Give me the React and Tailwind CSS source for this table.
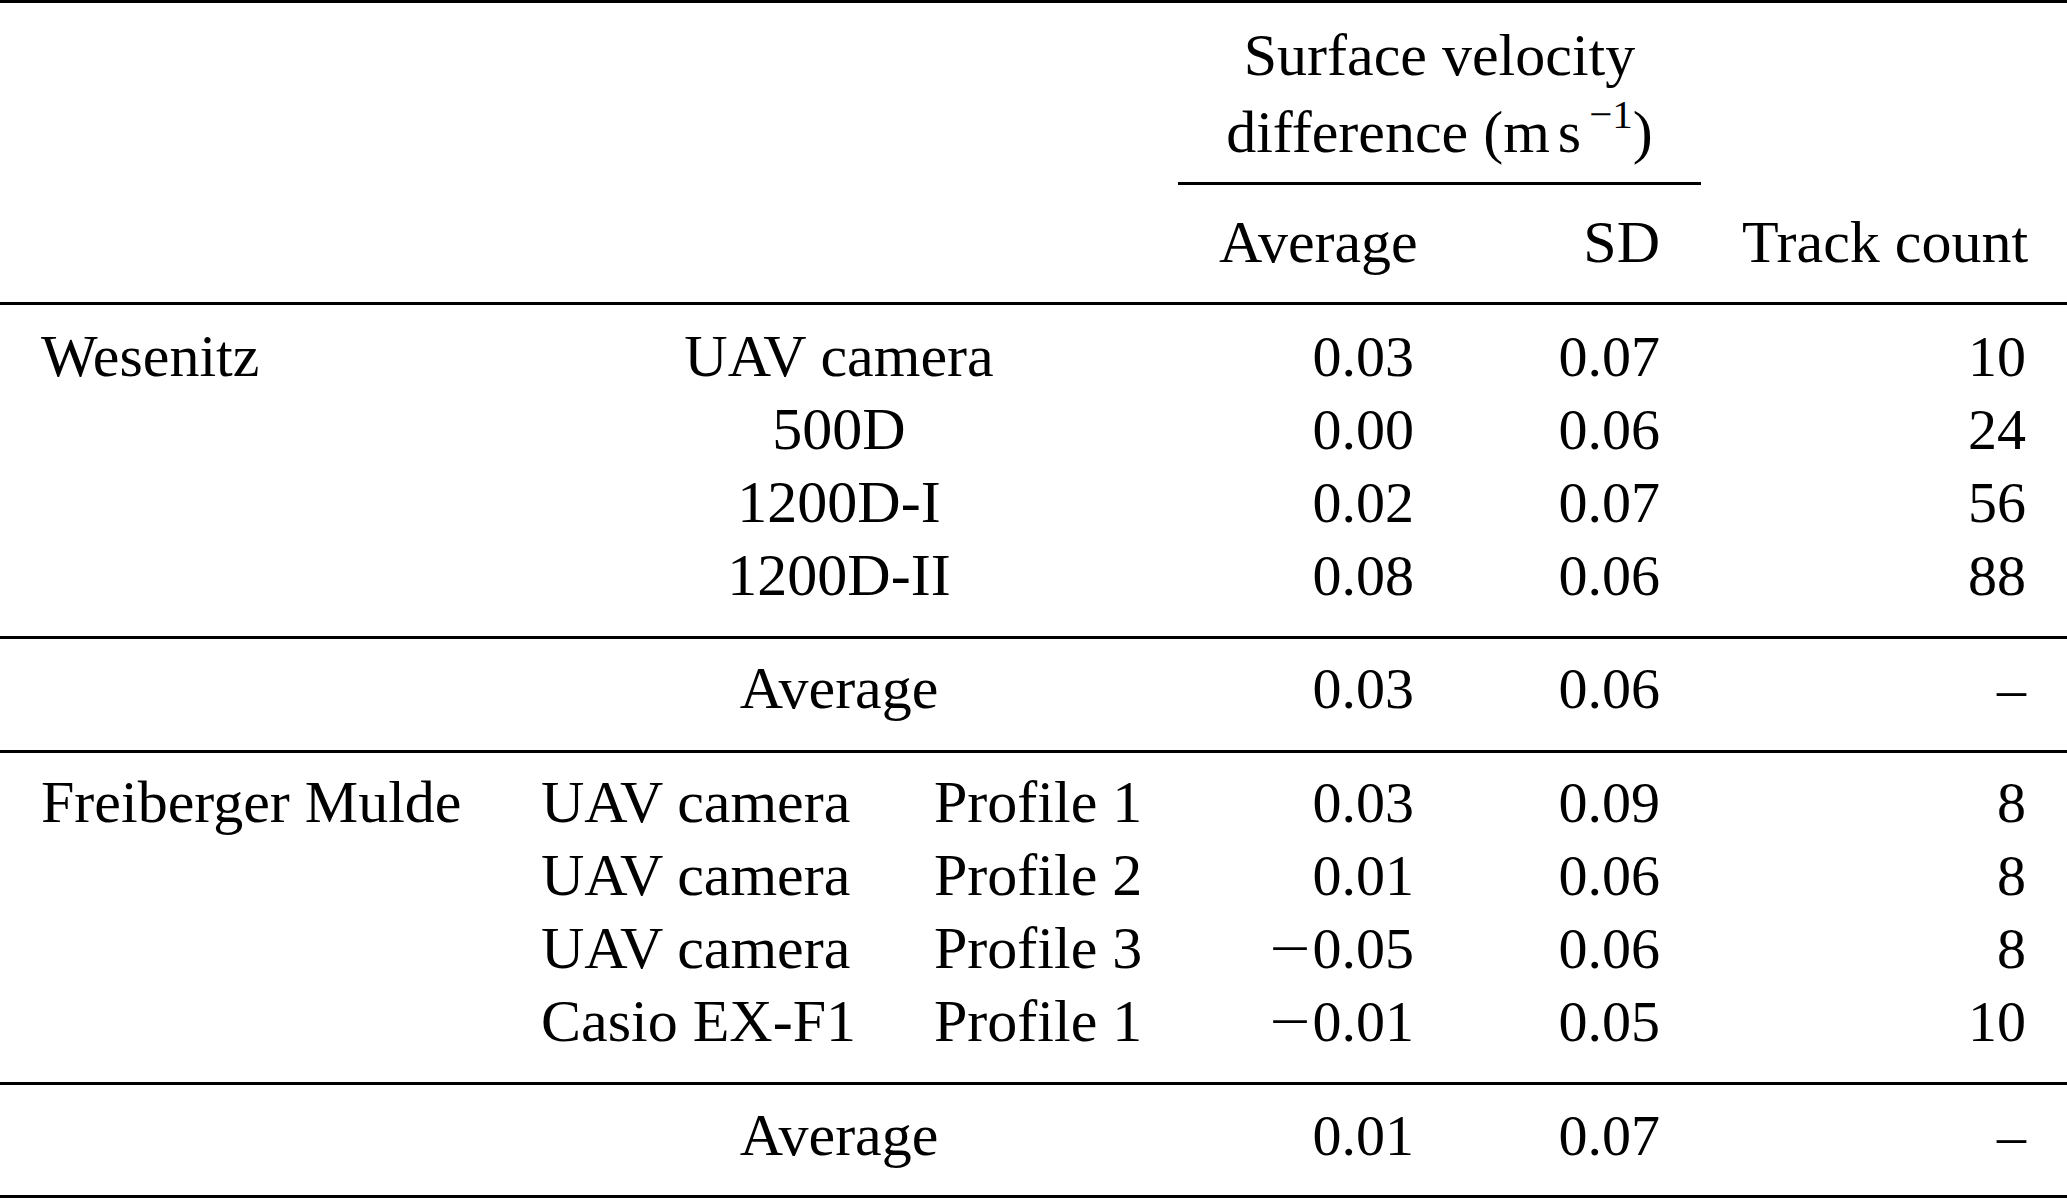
const cols = "grid grid-cols-[500px_393px_285px_277px_246px_366px]";
const num = "px-[41px] text-right text-[58px]";

const Minus = () => <span className="inline-block w-[46px] text-center scale-x-125">−</span>;

const wesenitz = [
  { name: "Wesenitz", cam: "UAV camera", avg: "0.03", sd: "0.07", n: "10" },
  { name: "", cam: "500D", avg: "0.00", sd: "0.06", n: "24" },
  { name: "", cam: "1200D-I", avg: "0.02", sd: "0.07", n: "56" },
  { name: "", cam: "1200D-II", avg: "0.08", sd: "0.06", n: "88" },
];

const mulde = [
  { name: "Freiberger Mulde", cam: "UAV camera", prof: "Profile 1", avg: "0.03", neg: false, sd: "0.09", n: "8" },
  { name: "", cam: "UAV camera", prof: "Profile 2", avg: "0.01", neg: false, sd: "0.06", n: "8" },
  { name: "", cam: "UAV camera", prof: "Profile 3", avg: "0.05", neg: true, sd: "0.06", n: "8" },
  { name: "", cam: "Casio EX-F1", prof: "Profile 1", avg: "0.01", neg: true, sd: "0.05", n: "10" },
];

function AverageRow({ avg, sd }) {
  return (
    <div className={cols + " h-[73px]"}>
      <div className="px-[41px]"></div>
      <div className="col-span-2 px-[41px] text-center">Average</div>
      <div className={num}>{avg}</div>
      <div className={num}>{sd}</div>
      <div className={num}>–</div>
    </div>
  );
}

export default function App() {
  return (
    <div className="w-[2067px] h-[1199px] bg-white text-black text-[60px] leading-[73px] font-['Liberation_Serif','Times_New_Roman',serif]">
      <div className="h-[3px] bg-black"></div>

      {/* header */}
      <div className={cols + " mt-[16px]"}>
        <div></div>
        <div></div>
        <div></div>
        <div className="col-span-2 text-center">
          <div className="h-[77px] whitespace-nowrap">Surface velocity</div>
          <div className="h-[73px] whitespace-nowrap">
            difference (m<span className="ml-[8px]">s</span>
            <span className="relative -top-[24px] text-[41px] leading-none ml-[8px]">−1</span>)
          </div>
        </div>
        <div></div>
      </div>
      <div className={cols + " mt-[13px]"}>
        <div></div>
        <div></div>
        <div></div>
        <div className="col-span-2 h-[3px] bg-black"></div>
        <div></div>
      </div>
      <div className={cols + " mt-[21px] h-[73px]"}>
        <div></div>
        <div></div>
        <div></div>
        <div className="px-[41px] text-right">Average</div>
        <div className="px-[41px] text-right">SD</div>
        <div className="px-[41px] text-right whitespace-nowrap">Track count</div>
      </div>
      <div className="h-[3px] bg-black mt-[23px]"></div>

      {/* Wesenitz */}
      <div className="mt-[15px]">
        {wesenitz.map((r, i) => (
          <div key={i} className={cols + " h-[73px]"}>
            <div className="px-[41px] whitespace-nowrap">{r.name}</div>
            <div className="col-span-2 px-[41px] text-center whitespace-nowrap">{r.cam}</div>
            <div className={num}>{r.avg}</div>
            <div className={num}>{r.sd}</div>
            <div className={num}>{r.n}</div>
          </div>
        ))}
      </div>
      <div className="h-[3px] bg-black mt-[24px]"></div>
      <div className="mt-[13px]">
        <AverageRow avg="0.03" sd="0.06" />
      </div>
      <div className="h-[3px] bg-black mt-[25px]"></div>

      {/* Freiberger Mulde */}
      <div className="mt-[13px]">
        {mulde.map((r, i) => (
          <div key={i} className={cols + " h-[73px]"}>
            <div className="px-[41px] whitespace-nowrap">{r.name}</div>
            <div className="px-[41px] whitespace-nowrap">{r.cam}</div>
            <div className="px-[41px] whitespace-nowrap">{r.prof}</div>
            <div className={num + " whitespace-nowrap"}>
              {r.neg && <Minus />}
              {r.avg}
            </div>
            <div className={num}>{r.sd}</div>
            <div className={num}>{r.n}</div>
          </div>
        ))}
      </div>
      <div className="h-[3px] bg-black mt-[24px]"></div>
      <div className="mt-[14px]">
        <AverageRow avg="0.01" sd="0.07" />
      </div>
      <div className="h-[3px] bg-black mt-[23px]"></div>
    </div>
  );
}
